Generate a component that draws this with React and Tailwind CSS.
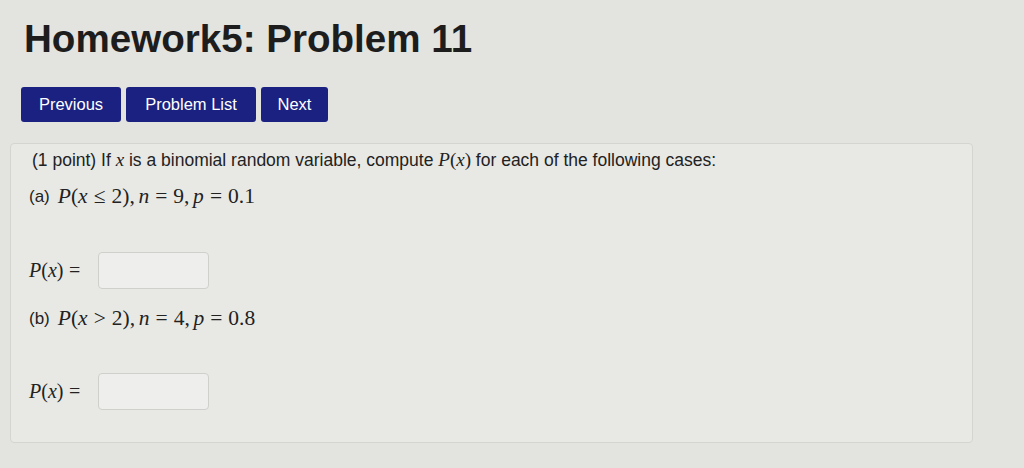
import React from "react";

const sans = { fontFamily: '"Liberation Sans", Arial, Helvetica, sans-serif' };
const serif = { fontFamily: '"Liberation Serif", "Times New Roman", serif' };

function I({ children }) {
  return <span className="italic">{children}</span>;
}

// relation symbol with MathJax-like thick spacing
function Rel({ children }) {
  return <span className="mx-[0.28em]">{children}</span>;
}

function Comma() {
  return <span className="mr-[0.17em]">,</span>;
}

function NavButton({ label, className = "" }) {
  return (
    <button className={`h-[35px] px-[16px] rounded-[3px] bg-[#1b2180] text-white text-[16.5px] leading-none ${className}`}>
      {label}
    </button>
  );
}

function AnswerRow() {
  return (
    <div className="flex items-center gap-[12px]">
      <span className="text-[20px] text-[#222]" style={serif}>
        <I>P</I>(<I>x</I>)<Rel>=</Rel>
      </span>
      <div className="w-[111px] h-[37px] rounded-[4px] border border-[#cfd0cc] bg-[#eeeeec]" />
    </div>
  );
}

export default function App() {
  return (
    <div className="w-[1024px] h-[468px] overflow-hidden bg-[#e3e4e0] text-[#1e1e1e]" style={sans}>
      <h1 className="pl-[24px] pt-[20px] text-[38.6px] leading-none font-bold text-[#1d1d1d]">
        Homework5: Problem 11
      </h1>

      <div className="flex gap-[5px] mt-[28px] ml-[21px]">
        <NavButton label="Previous" className="w-[100px]" />
        <NavButton label="Problem List" className="w-[130px]" />
        <NavButton label="Next" className="w-[67px]" />
      </div>

      <div className="mt-[21px] ml-[10px] w-[963px] h-[300px] rounded-[4px] border border-[#d4d5d1] bg-[#e8e9e5] pl-[18px] pt-[5px]">
        <p className="text-[17.5px] leading-[22px] text-[#222] pl-[3px]">
          (1 point) If <span className="italic text-[19px]" style={serif}>x</span> is a binomial random variable, compute{" "}
          <span className="text-[19px]" style={serif}><I>P</I>(<I>x</I>)</span> for each of the following cases:
        </p>

        <div className="mt-[15px] flex items-center gap-[8px] h-[22px]">
          <span className="text-[17px] text-[#222]">(a)</span>
          <span className="text-[21.5px] text-[#222]" style={serif}>
            <I>P</I>(<I>x</I><Rel>≤</Rel>2)<Comma /><I>n</I><Rel>=</Rel>9<Comma /><I>p</I><Rel>=</Rel>0.1
          </span>
        </div>

        <div className="mt-[44px]">
          <AnswerRow />
        </div>

        <div className="mt-[19px] flex items-center gap-[8px] h-[22px]">
          <span className="text-[17px] text-[#222]">(b)</span>
          <span className="text-[21.5px] text-[#222]" style={serif}>
            <I>P</I>(<I>x</I><Rel>&gt;</Rel>2)<Comma /><I>n</I><Rel>=</Rel>4<Comma /><I>p</I><Rel>=</Rel>0.8
          </span>
        </div>

        <div className="mt-[43px]">
          <AnswerRow />
        </div>
      </div>
    </div>
  );
}
